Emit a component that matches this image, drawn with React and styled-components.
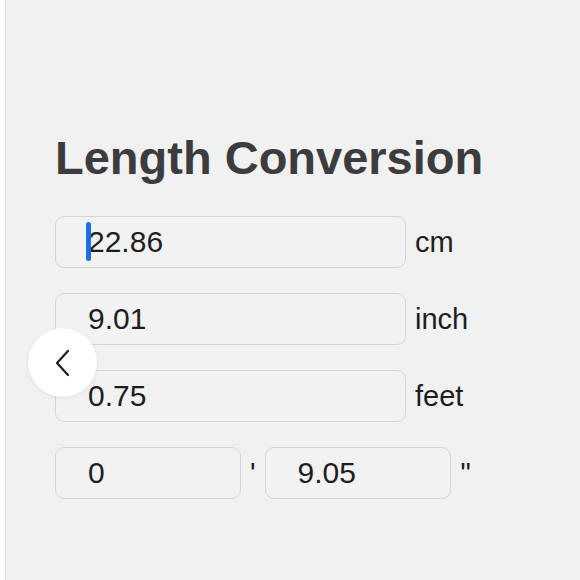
import React from "react";
import styled, { createGlobalStyle } from "styled-components";

const GlobalStyle = createGlobalStyle`
	html, body {
		margin: 0;
		padding: 0;
		background: #ffffff;
	}
	body {
		font-family: "Liberation Sans", Arial, sans-serif;
	}
`;

const Page = styled.div`
	position: relative;
	margin-left: 5px;
	min-height: 580px;
	box-sizing: border-box;
	border-left: 1px solid #dedede;
	background: #f1f1f1;
	padding: 135px 0 0 49px;
`;

const Title = styled.h1`
	margin: 0 0 35px;
	font-size: 47px;
	line-height: 46px;
	font-weight: bold;
	color: #3c3c3f;
`;

const Rows = styled.div`
	display: flex;
	flex-direction: column;
	gap: 25px;
`;

const Row = styled.div`
	display: flex;
	align-items: center;
`;

const Field = styled.div`
	position: relative;
	box-sizing: border-box;
	width: ${(p) => p.width}px;
	height: 52px;
	padding-left: 32px;
	display: flex;
	align-items: center;
	border: 1.5px solid #d4d4d4;
	border-radius: 9px;
	background: #f2f2f2;
	font-size: 30px;
	color: #1e1e1e;
`;

const Caret = styled.span`
	position: absolute;
	left: 30px;
	top: 5px;
	width: 5px;
	height: 39px;
	border-radius: 3px;
	background: #1c6fe3;
`;

const Unit = styled.span`
	margin-left: ${(p) => p.gap || 9}px;
	margin-right: ${(p) => p.after || 0}px;
	font-size: 29px;
	color: #1e1e1e;
`;

const BackButton = styled.button`
	position: absolute;
	left: 22px;
	top: 328px;
	width: 69px;
	height: 69px;
	border: none;
	border-radius: 50%;
	background: #ffffff;
	box-shadow: 0 1px 4px rgba(0, 0, 0, 0.08);
	display: flex;
	align-items: center;
	justify-content: center;
	padding: 0;
	cursor: pointer;
`;

const units = [
	{ value: "22.86", unit: "cm", caret: true },
	{ value: "9.01", unit: "inch" },
	{ value: "0.75", unit: "feet" },
];

const App = () => {
	return (
		<>
			<GlobalStyle />
			<Page>
				<Title>Length Conversion</Title>
				<Rows>
					{units.map((u) => (
						<Row key={u.unit}>
							<Field width={351}>
								{u.caret && <Caret />}
								{u.value}
							</Field>
							<Unit>{u.unit}</Unit>
						</Row>
					))}
					<Row>
						<Field width={186}>0</Field>
						<Unit gap={9} after={9}>'</Unit>
						<Field width={186}>9.05</Field>
						<Unit gap={10}>"</Unit>
					</Row>
				</Rows>
				<BackButton aria-label="Back">
					<svg width="18" height="28" viewBox="0 0 18 28" fill="none">
						<polyline
							points="14,2 3,14 14,26"
							stroke="#1e1e1e"
							strokeWidth="2.2"
							strokeLinecap="round"
							strokeLinejoin="round"
						/>
					</svg>
				</BackButton>
			</Page>
		</>
	);
};

export default App;
